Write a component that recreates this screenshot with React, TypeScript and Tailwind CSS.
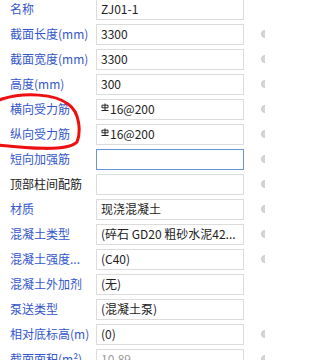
import React from 'react';

type Row = {
  label: string;
  value: string;
  rebar?: boolean;
  dark?: boolean;
  dot?: boolean;
  focused?: boolean;
  disabled?: boolean;
};

const rows: Row[] = [
  { label: '名称', value: 'ZJ01-1' },
  { label: '截面长度(mm)', value: '3300', dot: true },
  { label: '截面宽度(mm)', value: '3300', dot: true },
  { label: '高度(mm)', value: '300', dot: true },
  { label: '横向受力筋', value: '16@200', rebar: true, dot: true },
  { label: '纵向受力筋', value: '16@200', rebar: true, dot: true },
  { label: '短向加强筋', value: '', dot: true, focused: true },
  { label: '顶部柱间配筋', value: '', dark: true, dot: true },
  { label: '材质', value: '现浇混凝土', dot: true },
  { label: '混凝土类型', value: '(碎石 GD20 粗砂水泥42...', dot: true },
  { label: '混凝土强度...', value: '(C40)', dot: true },
  { label: '混凝土外加剂', value: '(无)' },
  { label: '泵送类型', value: '(混凝土泵)' },
  { label: '相对底标高(m)', value: '(0)', dot: true },
  { label: '截面面积(m²)', value: '10.89', dot: true, disabled: true },
];

function RebarIcon() {
  // HRB rebar grade symbol
  return (
    <svg width="8" height="9" viewBox="0 0 8 9" className="mr-[1px] -mt-[4px] shrink-0">
      <path d="M4 0.5V7.5M1 2.2h6v2.6H1zM0.5 7.5h7" fill="none" stroke="#222" strokeWidth="1" />
    </svg>
  );
}

export default function App() {
  return (
    <div
      className="relative w-[265px] h-[360px] overflow-hidden bg-white text-[12px] leading-none"
      style={{ fontFamily: '"Noto Sans CJK SC", "Liberation Sans", sans-serif' }}
    >
      <div className="flex flex-col gap-[5px] -mt-[1px]">
        {rows.map((r) => (
          <div key={r.label} className="flex items-center h-[20px]">
            <div
              className={
                'w-[96px] shrink-0 pl-[10px] whitespace-nowrap ' +
                (r.dark ? 'text-[#222]' : 'text-[#3356cc]')
              }
            >
              {r.label}
            </div>
            <div
              className={
                'w-[148px] h-[21px] shrink-0 flex items-center pl-[4px] whitespace-nowrap overflow-hidden border ' +
                (r.focused ? 'border-[#6a93dc]' : 'border-[#dcdcdc]') +
                (r.disabled ? ' text-[#9a9a9a]' : ' text-[#222]')
              }
            >
              {r.rebar && <RebarIcon />}
              {r.value}
            </div>
            {r.dot && (
              <div className="ml-[17px] w-[8px] h-[8px] rounded-full bg-[#d6d6d6] border border-[#c8c8c8] shrink-0" />
            )}
          </div>
        ))}
      </div>
      <svg className="absolute left-0 top-0 pointer-events-none" width="265" height="360">
        <path
          d="M-2 145 C 25 148, 68 152, 77 142 C 81 132, 80 112, 68 104 C 55 94, 25 92, 2 99 C -14 104, -14 138, -2 145"
          fill="none"
          stroke="#ee1010"
          strokeWidth="3"
          strokeLinecap="round"
        />
      </svg>
    </div>
  );
}
